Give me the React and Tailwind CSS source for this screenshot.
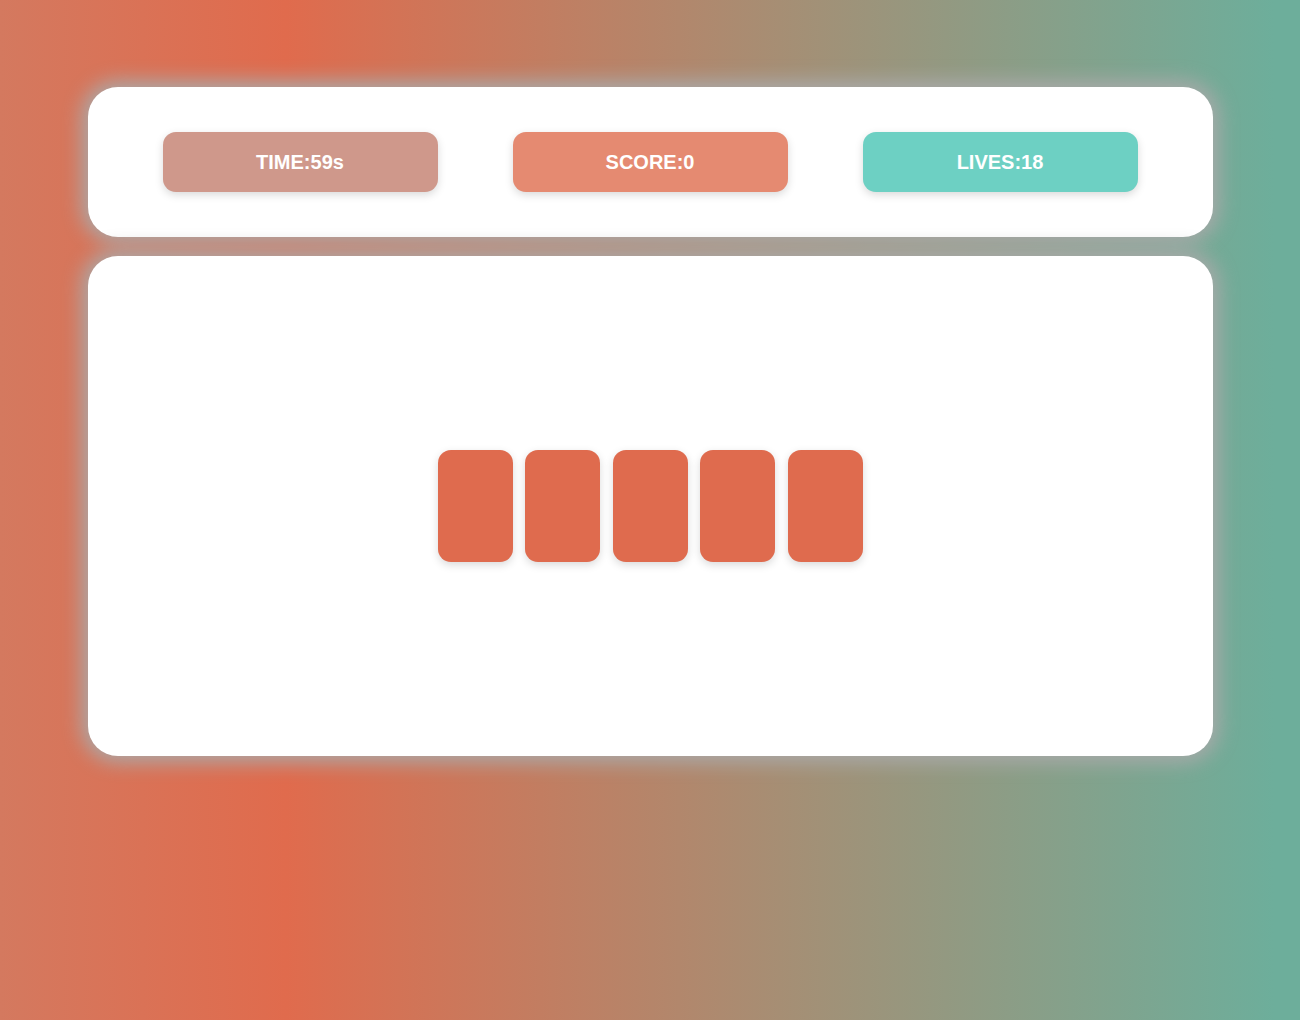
export default function App() {
  const stats = [
    { label: 'TIME:59s', cls: 'bg-[#cf988b]' },
    { label: 'SCORE:0', cls: 'bg-[#e58a71]' },
    { label: 'LIVES:18', cls: 'bg-[#6dd0c3]' },
  ]

  return (
    <div className="min-h-[1020px] w-full bg-[linear-gradient(to_right,#d4795f_0%,#e06b4d_22%,#a39076_62%,#6dae9b_98%)] pt-[87px] font-['Liberation_Sans',Arial,sans-serif]">
      <div className="mx-auto flex w-[1125px] flex-col gap-[19px]">
        <div className="flex h-[150px] items-center justify-between rounded-[30px] bg-white px-[75px] shadow-[0_0_20px_6px_#aaaaaa]">
          {stats.map((s) => (
            <div
              key={s.label}
              className={`flex h-[60px] w-[275px] items-center justify-center rounded-[13px] text-[20px] font-bold text-white shadow-[0_3px_8px_rgba(0,0,0,0.15)] ${s.cls}`}
            >
              {s.label}
            </div>
          ))}
        </div>

        <div className="flex h-[500px] items-center justify-center gap-[12.5px] rounded-[30px] bg-white shadow-[0_0_20px_6px_#aaaaaa]">
          {[0, 1, 2, 3, 4].map((i) => (
            <div key={i} className="h-[112px] w-[75px] rounded-[13px] bg-[#df6b4e] shadow-[0_3px_8px_rgba(0,0,0,0.15)]" />
          ))}
        </div>
      </div>
    </div>
  )
}
